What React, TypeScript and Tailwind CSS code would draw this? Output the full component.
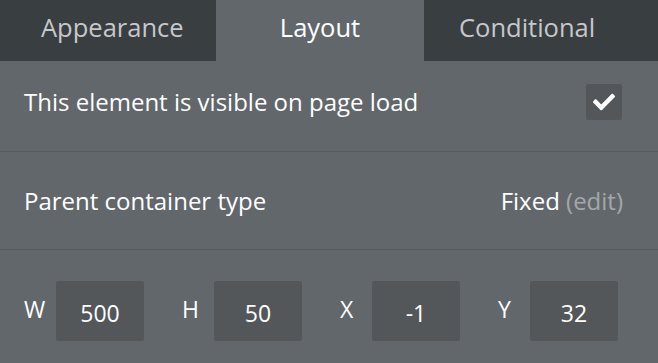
import { FaCheck } from 'react-icons/fa';

const tabs = [
  { label: 'Appearance', active: false, cls: 'w-[216px] pl-[41px]' },
  { label: 'Layout', active: true, cls: 'w-[208px] justify-center' },
  { label: 'Conditional', active: false, cls: 'w-[234px] pl-[35px]' },
];

const fields = [
  { label: 'W', value: '500' },
  { label: 'H', value: '50' },
  { label: 'X', value: '-1' },
  { label: 'Y', value: '32' },
];

export default function App() {
  return (
    <div
      className="w-[658px] h-[363px] overflow-hidden bg-[#62676b] text-white"
      style={{ fontFamily: '"Open Sans", "Noto Sans", sans-serif' }}
    >
      <div className="flex h-[61px]">
        {tabs.map(tab => (
          <div
            key={tab.label}
            className={`${tab.cls} flex items-center pb-1.5 text-[25.5px] ${
              tab.active ? 'bg-[#62676b] text-white' : 'bg-[#393e41] text-[#c6c8ca]'
            }`}
          >
            {tab.label}
          </div>
        ))}
      </div>

      <div className="flex h-[91px] items-center justify-between border-b border-[#575b5f] pb-2 pl-6 pr-9">
        <span className="text-[24px]">This element is visible on page load</span>
        <div className="flex h-9 w-9 items-center justify-center rounded-[2px] bg-[#53575a]">
          <FaCheck className="h-[22px] w-[22px]" />
        </div>
      </div>

      <div className="flex h-[98px] items-center justify-between border-b border-[#575b5f] pl-6 pr-[35px]">
        <span className="text-[24px]">Parent container type</span>
        <span className="text-[24px]">
          Fixed <span className="text-[#a3a7aa]">(edit)</span>
        </span>
      </div>

      <div className="flex items-center gap-[38px] pl-6 pt-[31px]">
        {fields.map(f => (
          <div key={f.label} className="flex items-center">
            <span className="w-8 pb-1 text-[23px] leading-none">{f.label}</span>
            <div className="flex h-[60px] w-[88px] items-center justify-center rounded-[2px] bg-[#53575a] pt-1 text-[23px]">
              {f.value}
            </div>
          </div>
        ))}
      </div>
    </div>
  );
}
